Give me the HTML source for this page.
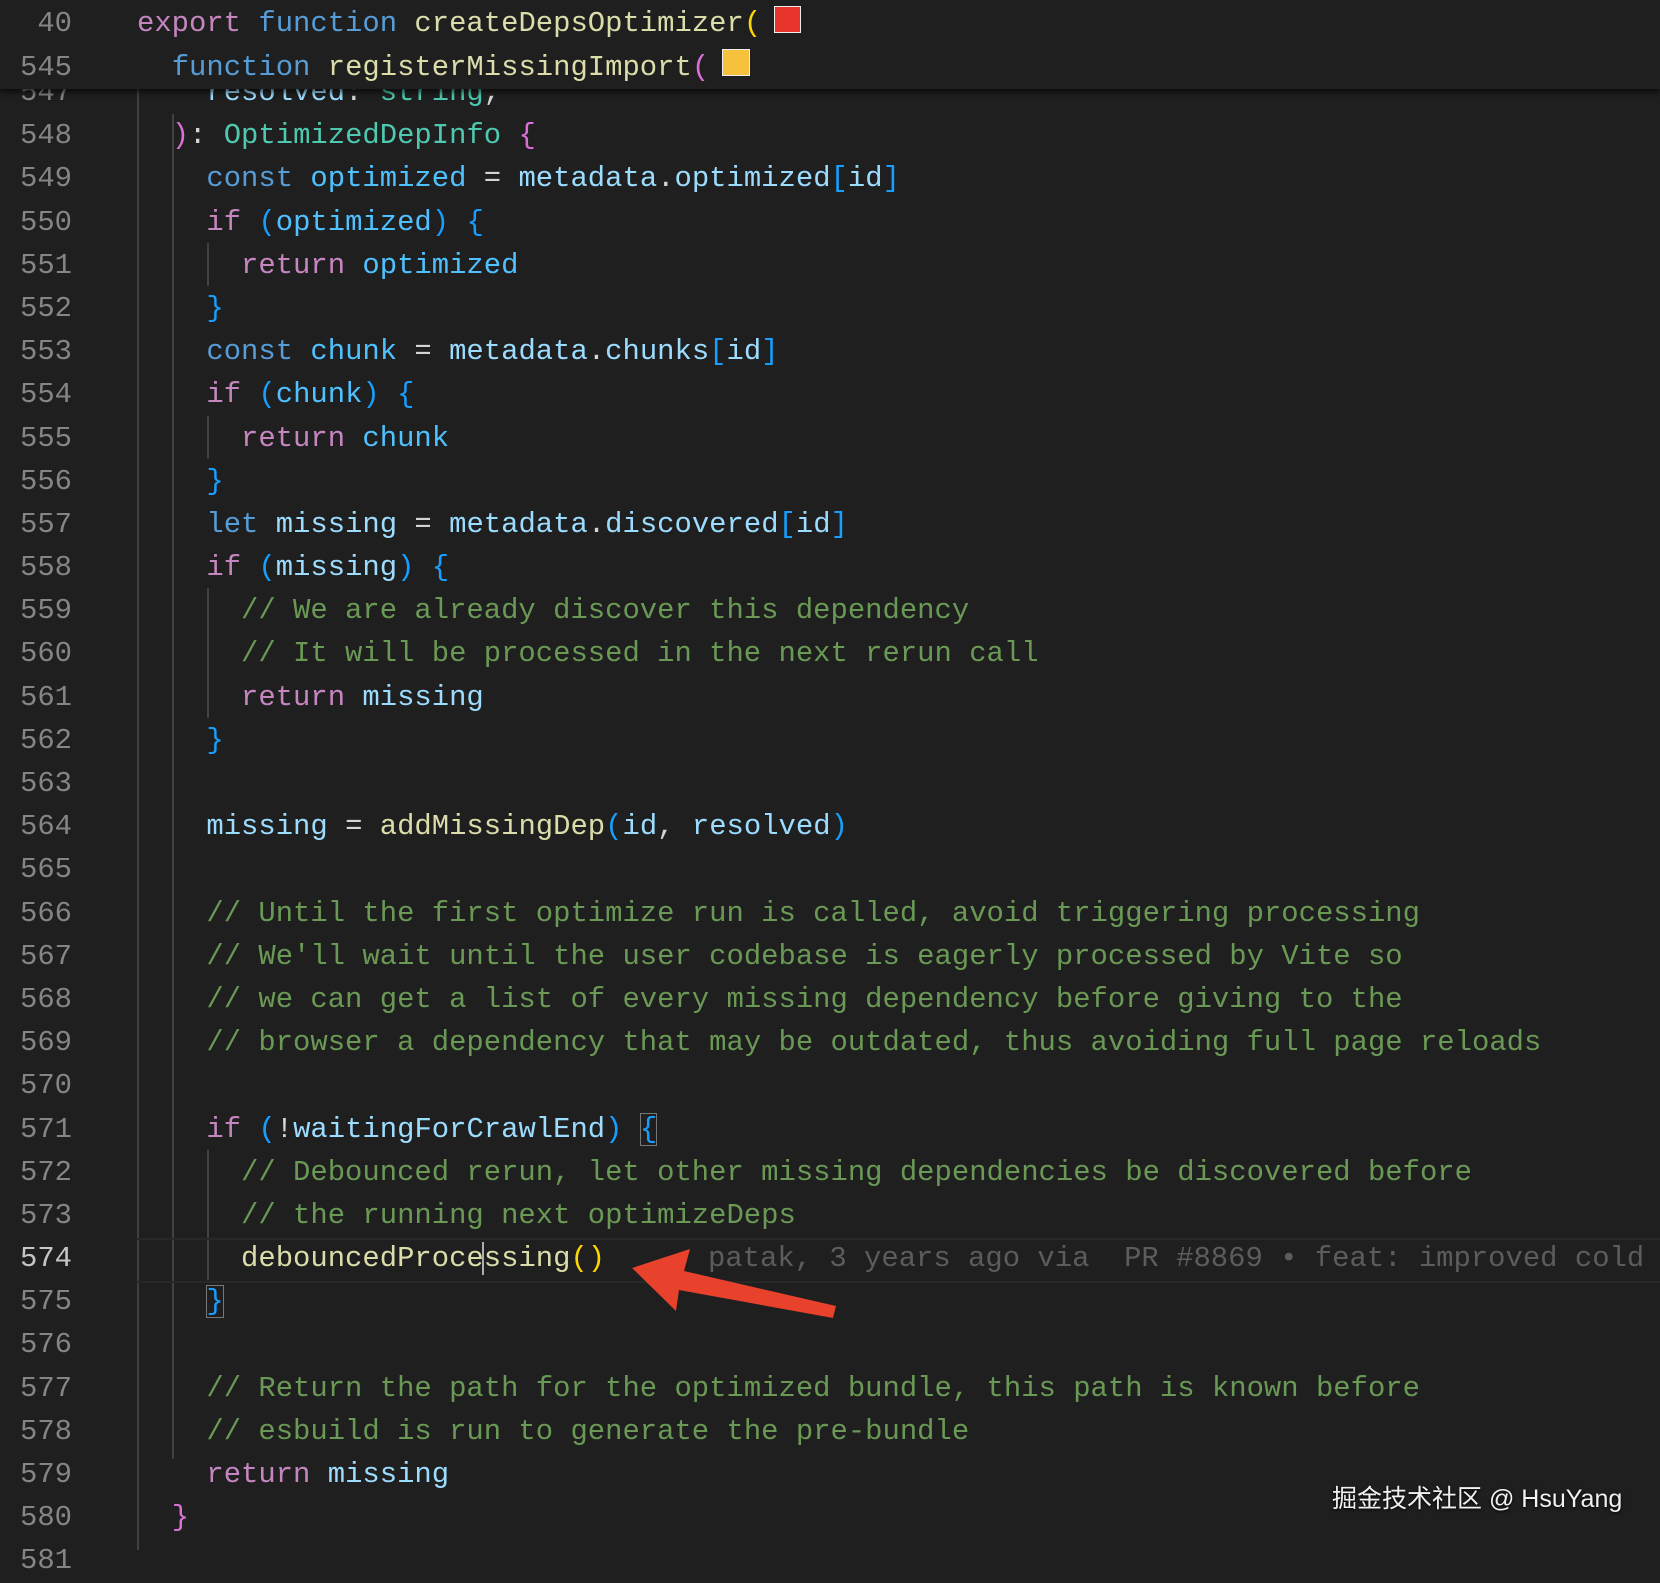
<!DOCTYPE html>
<html><head><meta charset="utf-8"><style>
html,body{margin:0;padding:0;width:1660px;height:1550px;overflow:hidden;background:#1f1f1f}
.code{position:absolute;left:0;top:71px;width:1660px;font-family:"Liberation Mono",monospace;font-size:28.9px;color:#d4d4d4}
.l{position:relative;height:43.2px;line-height:43.2px;white-space:pre}
.n{position:absolute;left:0;width:72px;text-align:right;color:#858585}
.t{position:absolute;left:137px}
.k{color:#c586c0}.b{color:#569cd6}.f{color:#dcdcaa}.v{color:#9cdcfe}.c{color:#4fc1ff}.ty{color:#4ec9b0}.m{color:#6a9955}
.p1{color:#da70d6}.p2{color:#179fff}.p3{color:#ffd700}
.g{position:absolute;width:1.5px;background:#404040}
.hdr{position:absolute;left:0;top:0;width:1660px;height:89px;background:#1f1f1f;box-shadow:0 3px 6px rgba(0,0,0,.7);font-family:"Liberation Mono",monospace;font-size:28.9px;color:#d4d4d4}
.box{outline:1.5px solid #777;outline-offset:-1px}
</style></head><body>
<div class="g" style="left:137px;top:89px;height:1461px"></div>
<div class="g" style="left:172px;top:114px;height:1345px"></div>
<div class="g" style="left:207px;top:243px;height:43px"></div>
<div class="g" style="left:207px;top:416px;height:43px"></div>
<div class="g" style="left:207px;top:588px;height:130px"></div>
<div class="g" style="left:207px;top:1150px;height:130px"></div>
<div style="position:absolute;left:137px;top:1238px;width:1523px;height:41px;border-top:2px solid #282828;border-bottom:2px solid #282828"></div>
<div class="code">
<div class="l"><span class="n">547</span><span class="t">    <span class="v">resolved</span>: <span class="ty">string</span>,</span></div>
<div class="l"><span class="n">548</span><span class="t">  <span class="p1">)</span>: <span class="ty">OptimizedDepInfo</span> <span class="p1">{</span></span></div>
<div class="l"><span class="n">549</span><span class="t">    <span class="b">const</span> <span class="c">optimized</span> = <span class="v">metadata</span>.<span class="v">optimized</span><span class="p2">[</span><span class="v">id</span><span class="p2">]</span></span></div>
<div class="l"><span class="n">550</span><span class="t">    <span class="k">if</span> <span class="p2">(</span><span class="c">optimized</span><span class="p2">)</span> <span class="p2">{</span></span></div>
<div class="l"><span class="n">551</span><span class="t">      <span class="k">return</span> <span class="c">optimized</span></span></div>
<div class="l"><span class="n">552</span><span class="t">    <span class="p2">}</span></span></div>
<div class="l"><span class="n">553</span><span class="t">    <span class="b">const</span> <span class="c">chunk</span> = <span class="v">metadata</span>.<span class="v">chunks</span><span class="p2">[</span><span class="v">id</span><span class="p2">]</span></span></div>
<div class="l"><span class="n">554</span><span class="t">    <span class="k">if</span> <span class="p2">(</span><span class="c">chunk</span><span class="p2">)</span> <span class="p2">{</span></span></div>
<div class="l"><span class="n">555</span><span class="t">      <span class="k">return</span> <span class="c">chunk</span></span></div>
<div class="l"><span class="n">556</span><span class="t">    <span class="p2">}</span></span></div>
<div class="l"><span class="n">557</span><span class="t">    <span class="b">let</span> <span class="v">missing</span> = <span class="v">metadata</span>.<span class="v">discovered</span><span class="p2">[</span><span class="v">id</span><span class="p2">]</span></span></div>
<div class="l"><span class="n">558</span><span class="t">    <span class="k">if</span> <span class="p2">(</span><span class="v">missing</span><span class="p2">)</span> <span class="p2">{</span></span></div>
<div class="l"><span class="n">559</span><span class="t">      <span class="m">// We are already discover this dependency</span></span></div>
<div class="l"><span class="n">560</span><span class="t">      <span class="m">// It will be processed in the next rerun call</span></span></div>
<div class="l"><span class="n">561</span><span class="t">      <span class="k">return</span> <span class="v">missing</span></span></div>
<div class="l"><span class="n">562</span><span class="t">    <span class="p2">}</span></span></div>
<div class="l"><span class="n">563</span></div>
<div class="l"><span class="n">564</span><span class="t">    <span class="v">missing</span> = <span class="f">addMissingDep</span><span class="p2">(</span><span class="v">id</span>, <span class="v">resolved</span><span class="p2">)</span></span></div>
<div class="l"><span class="n">565</span></div>
<div class="l"><span class="n">566</span><span class="t">    <span class="m">// Until the first optimize run is called, avoid triggering processing</span></span></div>
<div class="l"><span class="n">567</span><span class="t">    <span class="m">// We'll wait until the user codebase is eagerly processed by Vite so</span></span></div>
<div class="l"><span class="n">568</span><span class="t">    <span class="m">// we can get a list of every missing dependency before giving to the</span></span></div>
<div class="l"><span class="n">569</span><span class="t">    <span class="m">// browser a dependency that may be outdated, thus avoiding full page reloads</span></span></div>
<div class="l"><span class="n">570</span></div>
<div class="l"><span class="n">571</span><span class="t">    <span class="k">if</span> <span class="p2">(</span>!<span class="v">waitingForCrawlEnd</span><span class="p2">)</span> <span class="p2 box">{</span></span></div>
<div class="l"><span class="n">572</span><span class="t">      <span class="m">// Debounced rerun, let other missing dependencies be discovered before</span></span></div>
<div class="l"><span class="n">573</span><span class="t">      <span class="m">// the running next optimizeDeps</span></span></div>
<div class="l"><span class="n" style="color:#c6c6c6">574</span><span class="t">      <span class="f">debouncedProce<span style="border-left:2px solid #aeafad;margin-left:-2px">s</span>sing</span><span class="p3">()</span></span><span style="position:absolute;left:708px;color:#5c5c5c">patak, 3 years ago via  PR #8869 • feat: improved cold</span></div>
<div class="l"><span class="n">575</span><span class="t">    <span class="p2 box">}</span></span></div>
<div class="l"><span class="n">576</span></div>
<div class="l"><span class="n">577</span><span class="t">    <span class="m">// Return the path for the optimized bundle, this path is known before</span></span></div>
<div class="l"><span class="n">578</span><span class="t">    <span class="m">// esbuild is run to generate the pre-bundle</span></span></div>
<div class="l"><span class="n">579</span><span class="t">    <span class="k">return</span> <span class="v">missing</span></span></div>
<div class="l"><span class="n">580</span><span class="t">  <span class="p1">}</span></span></div>
<div class="l"><span class="n">581</span></div>
</div>
<div class="hdr">
<div class="l" style="position:absolute;top:2px;width:100%"><span class="n">40</span><span class="t"><span class="k">export</span> <span class="b">function</span> <span class="f">createDepsOptimizer</span><span class="p3">(</span></span></div>
<div class="l" style="position:absolute;top:46px;width:100%"><span class="n">545</span><span class="t">  <span class="b">function</span> <span class="f">registerMissingImport</span><span class="p1">(</span></span></div>
<div style="position:absolute;left:774px;top:6px;width:27px;height:27px;background:#e8332a;border:1px solid #eee;box-sizing:border-box"></div>
<div style="position:absolute;left:722px;top:49px;width:28px;height:27px;background:#f6c23e;border:1px solid #eee;box-sizing:border-box"></div>
</div>
<svg style="position:absolute;left:0;top:0" width="1660" height="1550">
<polygon points="632,1268 690,1249 684,1271 836,1306 833,1318 679,1290 676,1311" fill="#e8412c"/>
</svg>
<div style="position:absolute;left:1332px;top:1479px;font-family:'Liberation Sans','Noto Sans CJK SC',sans-serif;font-size:25px;color:#f0f0f0;text-shadow:0 1px 3px #000">掘金技术社区 @ HsuYang</div>
</body></html>
